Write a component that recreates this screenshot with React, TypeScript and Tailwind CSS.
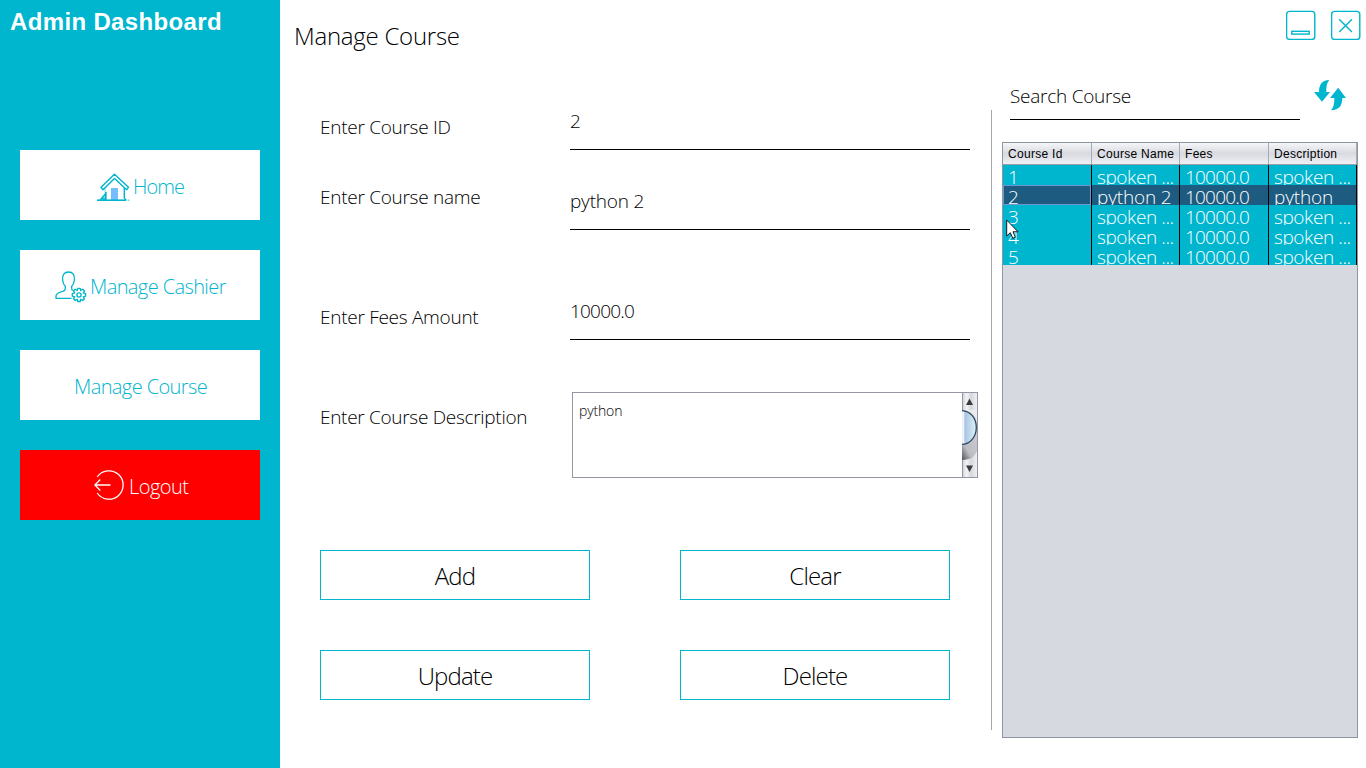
import React from "react";

const light = "font-['Open_Sans','Noto_Sans',sans-serif] font-light whitespace-nowrap";

function HomeIcon() {
  return (
    <svg width="33" height="30" viewBox="0 0 33 30" fill="none" stroke="#00b5ce" strokeWidth="1.4">
      <rect x="14" y="15" width="7" height="12" fill="#77bdfb" stroke="none" />
      <path d="M4 14.2 17.5 1.2 31.5 14.2 29.6 16.8 17.5 5.6 6 16.8Z" strokeLinejoin="round" />
      <path d="M27.3 15V25L29.3 27.4M8.7 19V26.5" />
      <path d="M4 26 8.7 20.5V26Z" fill="#00b5ce" fillOpacity=".45" />
      <path d="M0 27.2H29" strokeWidth="1.6" />
      <path d="M30.7 27.2H32.4" opacity=".6" />
      <path d="M8 14.5V19" opacity=".35" />
    </svg>
  );
}

function CashierIcon() {
  return (
    <svg width="32" height="32" viewBox="0 0 32 32" fill="none" stroke="#00b5ce" strokeWidth="1.35" strokeLinejoin="round">
      <path d="M16.5 27.3H1V25C1 22.6 4 21.4 8.2 20.2 9.6 19.7 10.3 19 10.3 17.2V15.3C8.7 13.8 8 11.8 7.6 9 7.2 4.2 9 1 13.5 1S19.8 4.2 19.4 9C19 11.8 18.3 13.8 16.7 15.3V17.2C16.7 18.3 17 19 17.7 19.5" />
      <path d="M22.8 17.4H25.2L25.7 19.5 27.8 18.2 29.5 19.9 28.3 21.9 30.6 22.6V25.2L28.3 25.8 29.5 27.8 27.8 29.5 25.7 28.3 25.2 30.5H22.8L22.2 28.3 20.2 29.5 18.5 27.8 19.7 25.8 17.3 25.2V22.6L19.7 21.9 18.5 19.9 20.2 18.2 22.2 19.5Z" />
      <circle cx="24" cy="24" r="2.1" />
    </svg>
  );
}

function LogoutIcon() {
  return (
    <svg width="30" height="30" viewBox="0 0 30 30" fill="none" stroke="white" strokeWidth="1.3">
      <path d="M3.2 7A14.2 14.2 0 1 1 3.2 23" />
      <path d="M16.5 15H.8M6.3 9.5.8 15 6.3 20.5" />
    </svg>
  );
}

function NavButton({ label, icon, className }: { label: string; icon?: React.ReactNode; className: string }) {
  return (
    <button className={`flex h-[70px] w-60 ${className}`}>
      {icon}
      <span className={`${light} mt-[23px] text-[20px] leading-[28px]`}>{label}</span>
    </button>
  );
}

function Field({ label, value, className, labelClass, valueClass }: { label: string; value: string; className: string; labelClass: string; valueClass: string }) {
  return (
    <div className={`flex ${className}`}>
      <label className={`${light} w-[250px] text-[19px] leading-7 tracking-[-0.28px] ${labelClass}`}>{label}</label>
      <div className={`${light} w-[400px] border-b border-black text-[19px] leading-7 ${valueClass}`}>{value}</div>
    </div>
  );
}

function ActionButton({ label }: { label: string }) {
  return (
    <button className={`${light} h-[50px] w-[270px] border border-[#00b5ce] pt-px text-[24px] leading-[46px] tracking-[-0.85px]`}>
      {label}
    </button>
  );
}

const cols = "grid grid-cols-[89px_88px_89px_88px]";
const rows = [
  ["1", "spoken ...", "10000.0", "spoken ..."],
  ["2", "python 2", "10000.0", "python"],
  ["3", "spoken ...", "10000.0", "spoken ..."],
  ["4", "spoken ...", "10000.0", "spoken ..."],
  ["5", "spoken ...", "10000.0", "spoken ..."],
];
const cellSpacing = ["", "tracking-[-0.4px]", "tracking-[-0.8px]", "tracking-[-0.4px]"];
const headings = ["Course Id", "Course Name", "Fees", "Description"];

function CourseTable() {
  return (
    <div className="relative mt-[22px] -ml-2 h-[596px] w-[356px] border border-[#8f95a1] bg-[#d6d9e0]">
      <div className={`${cols} h-[22px] border-b border-[#989ca8] bg-linear-to-b from-[#f5f6f8] via-[#d8dae1] to-[#eff1f5] font-['Liberation_Sans',sans-serif] text-[12px] leading-[22px] tracking-[0.3px]`}>
        {headings.map((h) => (
          <div key={h} className="h-[21px] border-r border-[#a5a9b3] pl-[5px] whitespace-nowrap">{h}</div>
        ))}
      </div>
      {rows.map((row, r) => (
        <div key={row[0]} className={`${cols} h-5 overflow-hidden text-white ${r === 1 ? "bg-[#1e5b80]" : "bg-[#00b5ce]"}`}>
          {row.map((cell, c) => (
            <div key={c} className={`${light} h-5 overflow-hidden border-r pl-[5px] text-[19px] leading-[24px] ${cell.startsWith("python") ? "tracking-[-0.15px]" : cellSpacing[c]} ${r === 1 && c === 0 ? "border-r-black shadow-[inset_0_0_0_1px_#6f96cf]" : "border-black"}`}>
              {cell}
            </div>
          ))}
        </div>
      ))}
      <svg className="absolute top-[76px] left-[3px]" width="13" height="21" viewBox="0 0 13 21">
        <path d="M.7 1V17L4.3 13.7 6.8 19.3 9.4 18.1 7 12.8H12Z" fill="white" stroke="#111827" strokeWidth="1" />
      </svg>
    </div>
  );
}

function ScrollBar() {
  return (
    <svg className="ml-auto" width="15" height="84" viewBox="0 0 15 84">
      <defs>
        <linearGradient id="track">
          <stop offset="0" stopColor="#c9ccd3" />
          <stop offset=".3" stopColor="#f3f4f6" />
          <stop offset=".6" stopColor="#d5d7dc" />
          <stop offset="1" stopColor="#eff0f3" />
        </linearGradient>
        <linearGradient id="thumb">
          <stop offset="0" stopColor="#b7cfe6" />
          <stop offset=".15" stopColor="#ffffff" />
          <stop offset=".25" stopColor="#a9c4df" />
          <stop offset="1" stopColor="#def3fc" />
        </linearGradient>
        <linearGradient id="shade" x1="0" y1="1" x2=".5" y2="0">
          <stop offset="0" stopColor="#50535a" />
          <stop offset=".3" stopColor="#bcbdc3" />
          <stop offset="1" stopColor="#d2d3d8" />
        </linearGradient>
      </defs>
      <rect width="15" height="84" fill="url(#track)" />
      <path d="M0 17H15V58C13 63 9 67 0 67Z" fill="url(#shade)" />
      <path d="M0 17H15V29C13 21 8 17 0 17Z" fill="#e9ebee" />
      <path d="M.5 0V17M.5 67V84" stroke="#9297a1" />
      <path d="M-1 17.5C8 17.5 14.3 25 14.3 34.5S8 51.5-1 51.5Z" fill="url(#thumb)" stroke="#2c4861" strokeWidth="1.3" />
      <path d="M7.5 5.5 11 12H4ZM7.5 79 4 72.5H11Z" fill="#3a3a3a" />
    </svg>
  );
}

export default function App() {
  return (
    <div className="flex h-[768px] w-[1366px] overflow-hidden bg-white text-black">
      <aside className="flex w-[280px] flex-col bg-[#00b5ce] px-5">
        <h1 className="-ml-2.5 h-[150px] pt-2 font-['Liberation_Sans',sans-serif] text-[24px] leading-7 font-bold tracking-[0.35px] whitespace-nowrap text-white">Admin Dashboard</h1>
        <nav className="flex flex-col gap-[30px]">
          <NavButton label="Home" className="gap-[3px] bg-white pl-[77px] tracking-[-0.9px] text-[#00b5ce]" icon={<div className="mt-[23px]"><HomeIcon /></div>} />
          <NavButton label="Manage Cashier" className="gap-[3px] bg-white pl-[35px] tracking-[-0.6px] text-[#00b5ce]" icon={<div className="mt-[21px]"><CashierIcon /></div>} />
          <NavButton label="Manage Course" className="bg-white pl-[54px] tracking-[-0.6px] text-[#00b5ce]" />
          <NavButton label="Logout" className="gap-[5px] bg-[#ff0000] pl-[74px] tracking-[-0.55px] text-white" icon={<div className="mt-5"><LogoutIcon /></div>} />
        </nav>
      </aside>

      <main className="w-[711px] pl-10">
        <h2 className={`${light} -ml-[26px] h-[107px] pt-5 text-[24px] leading-8 tracking-[-0.25px]`}>Manage Course</h2>
        <Field label="Enter Course ID" value="2" className="h-[43px]" labelClass="mt-[6px]" valueClass="" />
        <Field label="Enter Course name" value="python 2" className="mt-[37px] h-[43px]" labelClass="-mt-1" valueClass="tracking-[-0.2px]" />
        <Field label="Enter Fees Amount" value="10000.0" className="mt-[67px] h-[43px]" labelClass="mt-[6px]" valueClass="tracking-[-0.8px]" />
        <div className="mt-[52px] flex h-[86px]">
          <label className={`${light} mt-[11px] w-[252px] text-[19px] leading-7 tracking-[-0.3px]`}>Enter Course Description</label>
          <div className="flex w-[406px] border border-[#9297a1]">
            <span className={`${light} pt-2 pl-[6px] text-[14px] leading-5 tracking-[-0.15px]`}>python</span>
            <ScrollBar />
          </div>
        </div>
        <div className="mt-[72px] grid w-[630px] grid-cols-[270px_270px] justify-between gap-y-[50px]">
          <ActionButton label="Add" />
          <ActionButton label="Clear" />
          <ActionButton label="Update" />
          <ActionButton label="Delete" />
        </div>
      </main>

      <section className="flex flex-col">
        <div className="flex h-[110px] w-[375px] flex-col pl-[19px]">
          <div className="flex h-10 justify-end gap-[15px] pt-2.5 pr-[5px]">
            <svg width="30" height="30" viewBox="0 0 30 30" fill="none" stroke="#00b5ce" strokeWidth="1.4">
              <rect x=".6" y="1.4" width="28.2" height="28" rx="3" />
              <rect x="5.8" y="21.3" width="17.4" height="2.8" />
            </svg>
            <svg width="30" height="30" viewBox="0 0 30 30" fill="none" stroke="#00b5ce" strokeWidth="1.4">
              <rect x=".6" y="1.4" width="28.2" height="28" rx="3" />
              <path d="M8.2 9.2 21 22M21 9.2 8.2 22" />
            </svg>
          </div>
          <div className="mt-10 flex h-[40px]">
            <div className={`${light} h-[40px] w-[290px] shrink-0 border-b border-black pt-[2px] text-[19px] leading-7 tracking-[-0.25px]`}>Search Course</div>
            <svg className="ml-3.5 shrink-0" width="32" height="31" viewBox="0 0 32 31" fill="#00b5ce">
              <path d="M15.3 0C7.5 0 5 5 5 12H0L8 21.8 16 12H12.3C12 7 12.7 3 15.3 0Z" />
              <path d="M17 30.2C25 30.2 28.3 25.5 28.3 18H32L24.2 7.8 16 18H20.3C20.5 23.5 19.5 27.5 17 30.2Z" />
            </svg>
          </div>
        </div>
        <div className="flex h-[620px] border-l border-[#a3a7ae] pl-[18px]">
          <div className="mt-[10px]"><CourseTable /></div>
        </div>
      </section>
    </div>
  );
}
